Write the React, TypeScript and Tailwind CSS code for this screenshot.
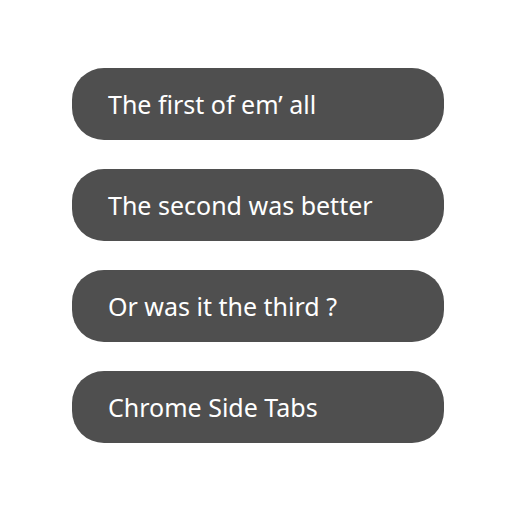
import React from "react";

const tabs: string[] = [
  "The first of em’ all",
  "The second was better",
  "Or was it the third ?",
  "Chrome Side Tabs",
];

export default function App() {
  return (
    <main className="min-h-screen bg-white pt-[68px] pr-[68px] pl-[72px] font-['Noto_Sans',sans-serif]">
      <nav aria-label="Side tabs" className="flex flex-col gap-[29px]">
        {tabs.map((tab) => (
          <button
            key={tab}
            type="button"
            className="flex h-[72px] w-full items-center rounded-[32px] bg-[#4f4f4f] px-9 text-left text-[25px] leading-8 text-white"
          >
            {tab}
          </button>
        ))}
      </nav>
    </main>
  );
}
